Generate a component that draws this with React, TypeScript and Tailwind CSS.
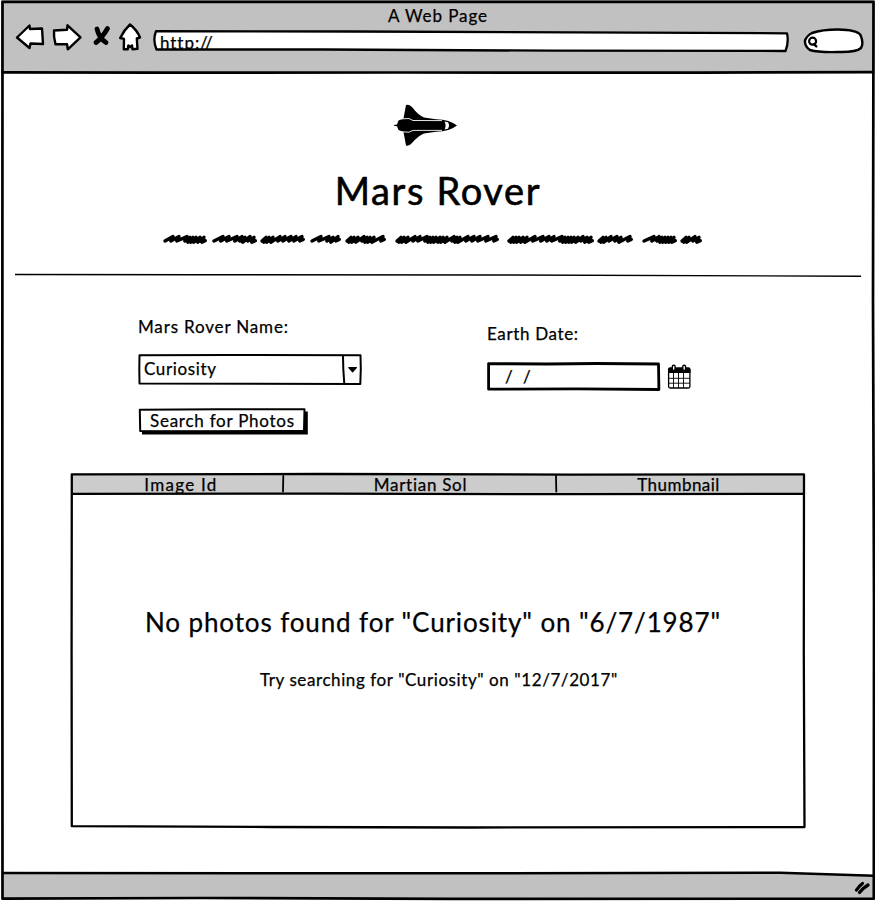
import React from "react";

const WORDS: { x: number; steps: number[] }[] = [
  { x: 165, steps: [7, 6, 8, 3, 3, 3, 4, 4] },
  { x: 214, steps: [8, 6, 8, 5, 3, 5, 4] },
  { x: 262, steps: [3, 3, 4, 7, 5, 6, 5, 6] },
  { x: 312, steps: [8, 8, 4, 5] },
  { x: 347, steps: [3, 3, 4, 6, 3, 3, 4, 9] },
  { x: 397, steps: [3, 3, 4, 7, 5, 7, 3, 3, 3, 4, 3, 4, 7, 3, 3, 8, 6, 6, 8, 8] },
  { x: 509, steps: [3, 3, 3, 4, 4, 8, 8, 6, 5, 8, 3, 3, 3, 3, 4, 5, 4, 4] },
  { x: 599, steps: [3, 3, 5, 6, 4, 9] },
  { x: 644, steps: [9, 5, 3, 3, 3, 3, 3] },
  { x: 682, steps: [3, 3, 6, 4] },
];

function scribble(x: number, steps: number[]) {
  let cx = x;
  let d = `M${x} 241`;
  steps.forEach((s) => {
    const dense = s < 5;
    d += ` L${cx + s + 1} ${dense ? 237.4 : 236.6} L${cx + s - 1.2} ${dense ? 242.2 : 241}`;
    cx += s;
  });
  return d + " l3.5 -1.5";
}

function Shape({
  box,
  w,
  h,
  className = "",
  children,
}: {
  box: string;
  w: number;
  h: number;
  className?: string;
  children: React.ReactNode;
}) {
  return (
    <svg
      viewBox={box}
      width={w}
      height={h}
      className={`block shrink-0 ${className}`}
      fill="white"
      stroke="black"
      strokeWidth="2.4"
      strokeLinejoin="round"
      strokeLinecap="round"
    >
      {children}
    </svg>
  );
}

function Outline({ w, h, sw, children }: { w: number; h: number; sw: number; children: React.ReactNode }) {
  return (
    <svg
      viewBox={`0 0 ${w} ${h}`}
      width={w}
      height={h}
      className="pointer-events-none absolute left-0 top-0 overflow-visible"
      fill="none"
      stroke="black"
      strokeWidth={sw}
      strokeLinejoin="round"
      strokeLinecap="round"
    >
      {children}
    </svg>
  );
}

function BrowserBar() {
  return (
    <header className="h-[73px] shrink-0 bg-[#c1c1c1]">
      <div className="h-[22px] pt-1 text-center leading-6 tracking-[0.93px]">A Web Page</div>
      <div className="flex h-8 items-start pl-3.5">
        <Shape box="14 22 32 30" w={32} h={30}>
          <path d="M17 37.5 L29.5 25.5 L30 29 L42 28.5 L43 44 L30.5 43.5 L29.5 48 Z" />
        </Shape>
        <Shape box="52 22 32 30" w={32} h={30} className="ml-1.5">
          <path d="M54 30.5 L67 29.8 L67.5 25.3 L80.5 37.3 L67.8 49.3 L67 44.3 L55.5 44.3 Q53.5 37 54 30.5 Z" />
        </Shape>
        <Shape box="92 24 20 24" w={20} h={24} className="ml-2 mt-0.5">
          <path fill="none" strokeWidth="4.8" d="M97 29 Q99 38 106 42.5" />
          <path fill="none" strokeWidth="4.8" d="M107.5 28.5 Q102 38 96 42.5" />
        </Shape>
        <Shape box="118 22 26 30" w={26} h={30} className="ml-1.5">
          <path d="M130 24.5 Q137 30 140 37.5 L136.8 38.5 L137.5 48.8 L132.5 49.3 L132 45.5 L130 47 L128.3 45.5 L127.8 49.3 L123.8 49.3 L124 38.8 L120.2 38 Q124 30 130 24.5 Z" />
        </Shape>
        <div className="relative ml-[9px] mt-2 h-[22px] w-[636px] shrink-0">
          <Outline w={636} h={22} sw={2.3}>
            <path
              fill="white"
              d="M3 1.2 L200 1.5 L420 2.3 L634 3.3 Q636 12 632.5 21 L400 20.7 L170 19.5 L3.5 19.5 Q-0.5 10 3 1.2 Z"
            />
          </Outline>
          <div className="relative h-[18.5px] overflow-hidden pl-[7px] leading-[26px] tracking-[0.95px]">http://</div>
        </div>
        <Shape box="802 26 63 30" w={63} h={30} className="ml-[13px] mt-1">
          <path d="M812 33 Q822 29.5 838 29.5 Q857 29.8 860.5 35 Q864 43 861 48 Q856 52.5 838 52 Q818 52.5 810 50 Q804.5 46 805 40.5 Q807 35.5 812 33 Z" />
          <circle cx="812.6" cy="41.2" r="3.5" strokeWidth="2.2" />
          <path strokeWidth="2.4" d="M814 44.2 L816.3 46.4" />
        </Shape>
      </div>
    </header>
  );
}

function Shuttle() {
  return (
    <svg viewBox="392 102 68 46" width="68" height="46" className="block">
      <path d="M406 105 Q409 104.3 412 107 Q418 115 424 117.5 L436 119.2 Q450 119.8 457 125.5 Q450 131.2 436 131.8 L424 133.5 Q418 136 412 143 Q409 146.500 406 145.5 L403.5 132 L398.5 130 L397 126.2 L394 125.8 L394 125 L397 124.5 L398.5 120.5 L403.5 118.5 Z" />
      <path d="M401 118.9 L409 118.5 L413 120.5 L442 120.6 M401 131.8 L409 132.2 L413 130.4 L442 130.4" fill="none" stroke="white" strokeWidth="0.9" />
      <path d="M444.5 121.5 L448 122.3 Q450 125.5 448 128.8 L444.5 129.5 Q446.600 125.5 444.5 121.5 Z" fill="white" />
    </svg>
  );
}

function CalendarIcon() {
  return (
    <svg viewBox="667 365 25 26" width="25" height="26" className="block">
      <rect x="668.6" y="369" width="21.3" height="20" rx="1.5" fill="white" stroke="black" strokeWidth="1.3" />
      <path d="M668 374 V370.5 Q668 369 670 369 H688.5 Q690.5 369 690.5 371 V374 Z" />
      <path d="M673.5 373 V389 M678.5 373 V389 M683.5 373 V389 M668 379.3 H690 M668 384.2 H690" stroke="black" strokeWidth="0.9" />
      <rect x="672.3" y="366.2" width="2.8" height="5.2" rx="1.3" fill="white" stroke="black" strokeWidth="1.4" />
      <rect x="682.8" y="366.2" width="2.8" height="5.2" rx="1.3" fill="white" stroke="black" strokeWidth="1.4" />
    </svg>
  );
}

function SearchForm() {
  return (
    <section className="flex h-[177px] pl-[138px] pt-px">
      <div className="w-[349px]">
        <div className="mt-9 h-6 leading-6 tracking-[0.84px]">Mars Rover Name:</div>
        <div className="relative mt-[15px] h-[31px] w-[224px] pl-1.5 leading-[30px] tracking-[0.64px]">
          <Outline w={224} h={31} sw={2}>
            <path d="M1.5 1.3 L90 0.9 L222.5 1.3 L222.8 15 L222.3 30 L1.5 29.6 L1.3 15 Z M205 1.5 L205.3 15 L206.3 30" />
            <path d="M210.8 13.6 H218.4 L214.6 17.8 Z" fill="black" strokeWidth="1.2" />
          </Outline>
          Curiosity
        </div>
        <div className="relative mt-[23px] h-[26px] w-[171px] pl-3 leading-[26px] tracking-[0.75px]">
          <Outline w={171} h={26} sw={2}>
            <path d="M4 24.6 L168 24.6 L168 3.5" strokeWidth="3.6" strokeLinecap="butt" strokeLinejoin="miter" />
            <path d="M1.8 1.8 L80 1.2 L166.5 1.3 L166 22.8 L80 23.3 L2.2 23 Z" />
          </Outline>
          Search for Photos
        </div>
      </div>
      <div>
        <div className="mt-[43px] h-6 leading-6 tracking-[0.64px]">Earth Date:</div>
        <div className="mt-4 flex items-center gap-[7px]">
          <div className="relative h-[29px] w-[173px] pl-[18px] leading-[30px]">
            <Outline w={173} h={29} sw={2.8}>
              <path d="M1.6 1.6 L60 2 L110 1.5 L171.5 2 L171.9 27.5 L90 26.8 L1.6 27.2 Z" />
            </Outline>
            <span className="inline-block w-[18px]">/</span>
            <span>/</span>
          </div>
          <CalendarIcon />
        </div>
      </div>
    </section>
  );
}

function Results() {
  return (
    <section className="relative ml-[71px] mt-[18px] h-[356px] w-[735px] shrink-0">
      <div className="m-px flex h-5 overflow-hidden bg-[#cccccc] text-center leading-[22px]">
        <div className="w-[211px] pl-[7px] tracking-[1.27px]">Image Id</div>
        <div className="w-[273px] pl-0.5 tracking-[0.73px]">Martian Sol</div>
        <div className="w-[249px] pr-1 tracking-[0.45px]">Thumbnail</div>
      </div>
      <div className="pl-[74px] pt-[109px] text-[26px] leading-9 tracking-[0.88px] whitespace-nowrap">
        No photos found for &quot;Curiosity&quot; on &quot;6/7/1987&quot;
      </div>
      <div className="mt-7 pl-[189px] leading-6 tracking-[0.59px] whitespace-nowrap">
        Try searching for &quot;Curiosity&quot; on &quot;12/7/2017&quot;
      </div>
      <Outline w={735} h={356} sw={2.3}>
        <path d="M0.8 1.3 L250 1 L500 1.6 L733 1.4 L732.8 180 L733.5 354 L400 354.5 L200 354 L0.8 353.2 L0.6 180 Z" />
        <path d="M1 20.8 L250 20.6 L500 21.2 L733 20.8" />
        <path d="M212.3 3 L212 18.5 M485 3 L485.3 18.5" strokeWidth="1.8" />
      </Outline>
    </section>
  );
}

export default function App() {
  return (
    <div className="relative flex h-[901px] w-[876px] flex-col overflow-hidden bg-white font-['Lato','Liberation_Sans',sans-serif] text-[17px] text-black [-webkit-text-stroke:0.25px_black]">
      <BrowserBar />
      <main className="flex h-[797px] shrink-0 flex-col">
        <div className="flex justify-center pt-[29px] pr-6">
          <Shuttle />
        </div>
        <h1 className="mt-[18px] text-center text-[38px] leading-12 tracking-[1.66px] [-webkit-text-stroke:0.6px_black]">
          Mars Rover
        </h1>
        <svg
          viewBox="0 232 876 16"
          width="876"
          height="16"
          className="mt-[18px] block shrink-0"
          fill="none"
          stroke="black"
          strokeWidth="3.4"
          strokeLinecap="round"
          strokeLinejoin="round"
        >
          {WORDS.map((w) => (
            <path key={w.x} d={scribble(w.x, w.steps)} />
          ))}
        </svg>
        <svg viewBox="0 270 876 8" width="876" height="8" className="mt-[22px] block shrink-0" fill="none" stroke="black">
          <path d="M15 274.5 L200 274.7 L500 275 L861 276.2" strokeWidth="1.4" />
        </svg>
        <SearchForm />
        <Results />
      </main>
      <footer className="flex h-[31px] shrink-0">
        <svg viewBox="0 870 876 31" width="876" height="31" className="block shrink-0">
          <path d="M2 873 L780 872.5 L874 876 L874 899 L2 899 Z" fill="#c1c1c1" />
          <path d="M2 873 L250 873.3 L500 873.2 L780 872.7 L874 875.8" fill="none" stroke="black" strokeWidth="2.6" />
          <path d="M856.5 890 Q859 886 862.5 883.5 M859.5 892.5 Q863 888 868 885" fill="none" stroke="black" strokeWidth="3.3" strokeLinecap="round" />
        </svg>
      </footer>
      <Outline w={876} h={901} sw={2.7}>
        <path d="M2.5 1.8 L873.5 1.8 L873 300 L874 600 L873.8 898.700 L450 898.8 L200 898 L2.5 898.7 L2.3 500 Z" />
        <path d="M2.5 72.3 L160 72.6 L400 72.5 L700 72.6 L873 72.2" />
      </Outline>
      <div className="pointer-events-none absolute inset-y-0 left-0 w-px bg-white" />
      <div className="pointer-events-none absolute inset-y-0 right-0 w-px bg-white" />
    </div>
  );
}
